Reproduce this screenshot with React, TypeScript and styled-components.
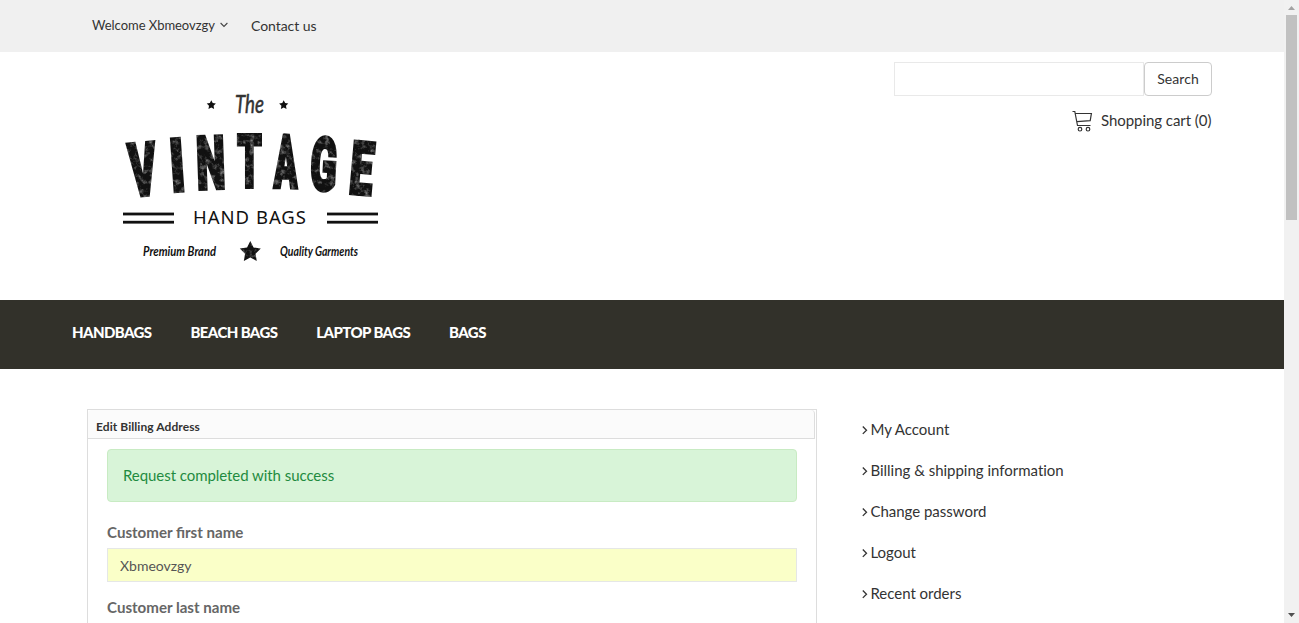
import React from "react";
import styled, { createGlobalStyle } from "styled-components";

const GlobalStyle = createGlobalStyle`
  * { box-sizing: border-box; }
  body {
    margin: 0;
    overflow: hidden;
    background: #fff;
    color: #333;
    font-family: Lato, "Liberation Sans", sans-serif;
    font-size: 15px;
    line-height: 21px;
  }
`;

const Frame = styled.div`
  display: flex;
  height: 623px;
  overflow: hidden;
`;

const Page = styled.div`
  flex: 1;
  min-width: 0;
`;

const Container = styled.div`
  width: 1140px;
  margin: 0 auto;
`;

const TopBar = styled.div`
  height: 52px;
  background: #f0f0f0;
`;

const TopLinks = styled(Container)`
  display: flex;
  align-items: center;
  height: 50px;
  padding-left: 20px;
`;

const Welcome = styled.a`
  display: flex;
  align-items: center;
  width: 159px;
  gap: 5px;
  font-size: 13px;
  letter-spacing: -0.03px;
`;

const ContactLink = styled.a`
  font-size: 14px;
  letter-spacing: -0.06px;
`;

const Header = styled(Container)`
  display: flex;
  justify-content: space-between;
  height: 248px;
`;

const LogoLink = styled.a`
  padding: 28px 0 0 38px;
`;

const Tools = styled.div`
  display: flex;
  flex-direction: column;
  align-items: flex-end;
  padding-top: 10px;
`;

const SearchForm = styled.form`
  display: flex;
`;

const SearchField = styled.input`
  width: 250px;
  height: 34px;
  padding: 6px 12px;
  border: 1px solid #e9e9e9;
  background: #fff;
  outline: none;
`;

const SearchButton = styled.button`
  width: 68px;
  height: 34px;
  padding: 0 0 2px;
  border: 1px solid #ccc;
  border-radius: 4px;
  background: #fff;
  color: #333;
  font: 14px Lato, sans-serif;
  letter-spacing: 0.08px;
`;

const CartLink = styled.a`
  display: flex;
  align-items: flex-start;
  gap: 8px;
  margin-top: 14px;
  padding-right: 0.6px;
  letter-spacing: -0.05px;
`;

const NavBar = styled.nav`
  height: 69px;
  background: #32312a;
`;

const NavLinks = styled(Container)`
  display: flex;
  gap: 39px;
  padding-top: 22px;
`;

const NavLink = styled.a`
  color: #fff;
  font-size: 15px;
  font-weight: 900;
  letter-spacing: -0.6px;
`;

const Content = styled(Container)`
  display: flex;
  padding: 40px 0 0 15px;
`;

const Panel = styled.section`
  width: 730px;
  height: 300px;
  border: 1px solid #ddd;
`;

const PanelTitle = styled.h3`
  width: 727px;
  height: 29px;
  margin: 0;
  padding: 7px 8px 0;
  border-right: 1px solid #ddd;
  border-bottom: 1px solid #ddd;
  border-top-left-radius: 4px;
  border-top-right-radius: 4px;
  background: #fbfbfb;
  font-size: 12px;
  font-weight: 700;
  line-height: 20px;
  letter-spacing: 0.07px;
`;

const PanelBody = styled.div`
  padding: 10px 19px;
`;

const Alert = styled.div`
  height: 53px;
  margin-bottom: 20px;
  padding: 15px;
  border: 1px solid #c8ebc3;
  border-radius: 4px;
  background: #d8f4d8;
  color: #1f8b40;
  letter-spacing: -0.06px;
`;

const Label = styled.label`
  display: block;
  margin-bottom: 5px;
  color: #666;
  font-size: 15.1px;
  font-weight: 700;
`;

const Field = styled.input`
  display: block;
  width: 100%;
  height: 34px;
  margin-bottom: 15px;
  padding: 6px 12px;
  border: 1px solid #e5e7e6;
  background: #faffc8;
  color: #555;
  font: 14px Lato, sans-serif;
  outline: none;
`;

const SideMenu = styled.ul`
  display: flex;
  flex-direction: column;
  gap: 20px;
  margin: 10px 0 0 45px;
  padding: 0;
  list-style: none;
`;

const SideItem = styled.li`
  display: flex;
  align-items: center;
  gap: 2.4px;
  letter-spacing: -0.01px;
`;

const ScrollTrack = styled.div`
  display: flex;
  flex-direction: column;
  justify-content: space-between;
  align-items: center;
  width: 15px;
  background: #f1f1f1;
`;

const ScrollThumb = styled.div`
  width: 11px;
  height: 205px;
  margin-bottom: auto;
  background: #c1c1c1;
`;

const ScrollArrow = styled.svg`
  width: 15px;
  height: 15px;
`;

const starPoints = Array.from({ length: 10 }, (_, i) => {
  const r = i % 2 ? 0.5 : 1;
  const a = (Math.PI * i) / 5 - Math.PI / 2;
  return `${(r * Math.cos(a)).toFixed(3)},${(r * Math.sin(a)).toFixed(3)}`;
}).join(" ");

const Star = ({ x, y, r }: { x: number; y: number; r: number }) => (
  <polygon points={starPoints} transform={`translate(${x} ${y}) scale(${r})`} />
);

const letters = [
  { c: "V", x: 35, y: 115, turn: -5, sx: 0.56 },
  { c: "I", x: 69, y: 111, turn: -4, sx: 0.66 },
  { c: "N", x: 101.5, y: 108.5, turn: -2, sx: 0.56 },
  { c: "T", x: 139.5, y: 107, turn: 0, sx: 0.53 },
  { c: "A", x: 175.5, y: 107.5, turn: 1, sx: 0.47 },
  { c: "G", x: 212.5, y: 110, turn: 3, sx: 0.53 },
  { c: "E", x: 249.5, y: 114, turn: 5, sx: 0.57 },
];

const Logo = () => (
  <svg width="280" height="190" viewBox="0 0 280 190" fill="#111">
    <defs>
      <filter id="worn" x="-5%" y="-5%" width="110%" height="110%" colorInterpolationFilters="sRGB">
        <feTurbulence type="fractalNoise" baseFrequency="0.2" numOctaves="4" seed="6" result="noise" />
        <feColorMatrix in="noise" type="matrix" values="0 0 0 0 1  0 0 0 0 1  0 0 0 0 1  1.1 0 0 0 -0.53" result="specks" />
        <feComposite in="specks" in2="SourceGraphic" operator="in" result="wear" />
        <feMerge>
          <feMergeNode in="SourceGraphic" />
          <feMergeNode in="wear" />
        </feMerge>
      </filter>
    </defs>
    <Star x={101.3} y={25} r={4.8} />
    <Star x={173.7} y={25} r={4.8} />
    <text x="125" y="33" fontFamily="Lato" fontStyle="italic" fontWeight="400" fontSize="25" fill="#333" stroke="#333" strokeWidth=".5" textLength="29" lengthAdjust="spacingAndGlyphs">The</text>
    <g filter="url(#worn)" fontFamily="Roboto" fontWeight="900" fontSize="73" stroke="#111" strokeWidth="4" textAnchor="middle">
      {letters.map((l) => (
        <text key={l.c} transform={`translate(${l.x} ${l.y}) rotate(${l.turn}) scale(${l.sx} 1)`}>
          {l.c}
        </text>
      ))}
    </g>
    {[13, 217].map((x) => (
      <g key={x}>
        <rect x={x} y="132.6" width="51" height="2.8" />
        <rect x={x} y="140.8" width="51" height="2.8" />
      </g>
    ))}
    <text x="83" y="144" fontFamily="Noto Sans" fontSize="18.5" textLength="113" lengthAdjust="spacing">HAND BAGS</text>
    <text x="33" y="176" fontFamily="Lato" fontStyle="italic" fontWeight="700" fontSize="14" textLength="73" lengthAdjust="spacingAndGlyphs">Premium Brand</text>
    <g filter="url(#worn)">
      <Star x={140.3} y={172} r={11} />
    </g>
    <text x="170" y="176" fontFamily="Lato" fontStyle="italic" fontWeight="700" fontSize="14" textLength="78" lengthAdjust="spacingAndGlyphs">Quality Garments</text>
  </svg>
);

const CartIcon = () => (
  <svg width="21" height="22" viewBox="0 0 21 22" fill="none" stroke="#333" strokeWidth="1.2">
    <path d="M.5 1.5h2.3L5.5 15.5h13M3.2 3.5H19.4L18.2 10.6 4.9 11.7" />
    <circle cx="8" cy="19.2" r="1.8" />
    <circle cx="16" cy="19.2" r="1.8" />
  </svg>
);

const AngleDown = () => (
  <svg width="8" height="6" viewBox="0 0 8 6" fill="none" stroke="#444" strokeWidth="1.1">
    <path d="M.6 1 4 4.4 7.4 1" />
  </svg>
);

const AngleRight = () => (
  <svg width="6" height="10" viewBox="0 0 6 10" fill="none" stroke="#333" strokeWidth="1.3">
    <path d="M.8 1.5 4.5 5.2 .8 8.9" />
  </svg>
);

const categories = ["HANDBAGS", "BEACH BAGS", "LAPTOP BAGS", "BAGS"];
const accountLinks = ["My Account", "Billing & shipping information", "Change password", "Logout", "Recent orders"];

export default function App() {
  return (
    <>
      <GlobalStyle />
      <Frame>
        <Page>
          <TopBar>
            <TopLinks>
              <Welcome>Welcome Xbmeovzgy <AngleDown /></Welcome>
              <ContactLink>Contact us</ContactLink>
            </TopLinks>
          </TopBar>
          <Header>
            <LogoLink><Logo /></LogoLink>
            <Tools>
              <SearchForm>
                <SearchField />
                <SearchButton type="button">Search</SearchButton>
              </SearchForm>
              <CartLink><CartIcon />Shopping cart (0)</CartLink>
            </Tools>
          </Header>
          <NavBar>
            <NavLinks>
              {categories.map((name) => <NavLink key={name}>{name}</NavLink>)}
            </NavLinks>
          </NavBar>
          <Content>
            <Panel>
              <PanelTitle>Edit Billing Address</PanelTitle>
              <PanelBody>
                <Alert>Request completed with success</Alert>
                <Label>Customer first name</Label>
                <Field defaultValue="Xbmeovzgy" />
                <Label>Customer last name</Label>
                <Field />
              </PanelBody>
            </Panel>
            <SideMenu>
              {accountLinks.map((name) => (
                <SideItem key={name}><AngleRight />{name}</SideItem>
              ))}
            </SideMenu>
          </Content>
        </Page>
        <ScrollTrack>
          <ScrollArrow viewBox="0 0 15 15"><path d="M4 10h7L7.5 6z" fill="#a3a3a3" /></ScrollArrow>
          <ScrollThumb />
          <ScrollArrow viewBox="0 0 15 15"><path d="M4 5h7L7.5 9z" fill="#505050" /></ScrollArrow>
        </ScrollTrack>
      </Frame>
    </>
  );
}
